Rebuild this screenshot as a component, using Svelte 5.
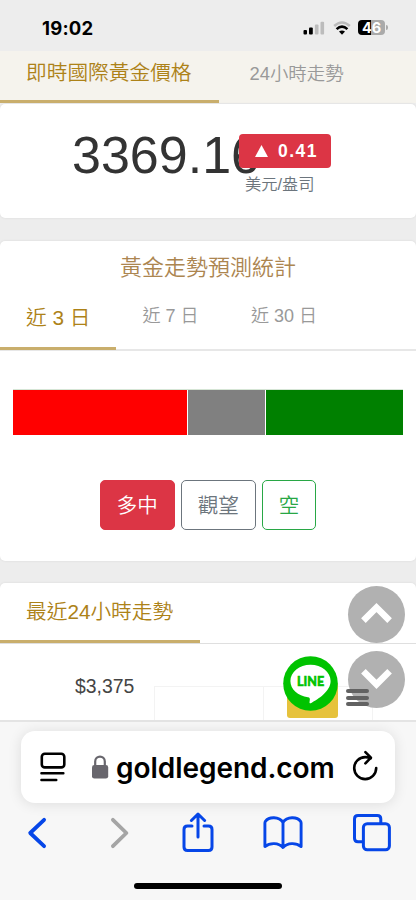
<script lang="ts">
	const periods = ['近 3 日', '近 7 日', '近 30 日'];
	let period = $state(0);

	const forecast = [
		{ name: 'long', share: 174 },
		{ name: 'hold', share: 77 },
		{ name: 'short', share: 137 }
	];
</script>

<div class="phone">
	<header class="status">
		<span class="time">19:02</span>
		<div class="signals">
			<svg width="22" height="14" viewBox="0 0 22 14">
				<rect x="0.5" y="9" width="3.5" height="4.5" rx="1" />
				<rect x="6" y="6.5" width="3.8" height="7" rx="1" />
				<rect x="11.9" y="3.6" width="3.6" height="9.9" rx="1" fill="#bcbcbc" />
				<rect x="17.5" y="0.8" width="3.6" height="12.7" rx="1" fill="#bcbcbc" />
			</svg>
			<svg class="wifi" width="18" height="14" viewBox="0 0 18 14" fill="none" stroke-width="2.6">
				<path d="M1.2 5 Q9 -2 16.8 5" stroke="#bcbcbc" />
				<path d="M3.6 8.1 Q9 3.1 14.4 8.1" stroke="#000" />
				<path d="M6 10.6 Q9 8.6 12 10.6 L9 13.7Z" fill="#000" />
			</svg>
			<div class="battery"><span>46</span></div>
			<i class="battery-cap"></i>
		</div>
	</header>

	<main>
		<nav class="tabs top-tabs">
			<button class="tab active">即時國際黃金價格</button>
			<button class="tab">24小時走勢</button>
		</nav>

		<section class="card price-card">
			<span class="price">3369.16</span>
			<div class="change">
				<span class="badge"><svg width="13" height="12" viewBox="0 0 13 12"><path d="M6.5 0L13 12H0Z" fill="#fff" /></svg>0.41</span>
				<span class="unit">美元/盎司</span>
			</div>
		</section>

		<section class="card forecast-card">
			<h2>黃金走勢預測統計</h2>
			<nav class="tabs period-tabs">
				{#each periods as label, i}
					<button class="tab" class:active={period === i} onclick={() => (period = i)}>{label}</button>
				{/each}
			</nav>
			<div class="bar">
				{#each forecast as part}
					<div class={part.name} style="flex: {part.share} 0 0"></div>
				{/each}
			</div>
			<div class="votes">
				<button class="vote danger">多中</button>
				<button class="vote secondary">觀望</button>
				<button class="vote success">空</button>
			</div>
		</section>

		<section class="card chart-card">
			<nav class="tabs chart-tabs">
				<button class="tab active">最近24小時走勢</button>
			</nav>
			<div class="chart">
				<span class="axis">$3,375</span>
				<div class="grid"><i></i><i></i></div>
			</div>
		</section>

		<button class="scroll up" aria-label="Scroll up">
			<svg width="57" height="57" viewBox="0 0 57 57"><path d="M15.4 34.6L28.5 21.5L41.6 34.6" /></svg>
		</button>
		<button class="scroll down" aria-label="Scroll down">
			<svg width="57" height="57" viewBox="0 0 57 57"><path d="M15.4 20.2L28.5 33.3L41.6 20.2" /></svg>
		</button>
		<div class="range"></div>
		<button class="line" aria-label="LINE">
			<svg width="55" height="55" viewBox="0 0 55 55">
				<circle cx="27.5" cy="27.5" r="27.3" fill="#00c300" />
				<path d="M27.5 8.7C16.4 8.7 7.4 16 7.4 25.1C7.4 33.4 15 40.2 25 41.3C26.7 41.7 27.1 42.4 26.8 44L26.5 46.2C26.4 47.2 27.2 47.6 28.3 47C34.8 43.3 47.6 35.7 47.6 25.1C47.6 16 38.6 8.7 27.5 8.7Z" fill="#fff" />
				<text x="27.6" y="30.4" text-anchor="middle" textLength="27" lengthAdjust="spacingAndGlyphs">LINE</text>
			</svg>
		</button>
		<div class="menu"><i></i><i></i><i></i></div>
	</main>

	<footer class="browser">
		<div class="address">
			<svg class="page-icon" width="27" height="31" viewBox="0 0 27 31" fill="none" stroke="#000" stroke-width="2.6" stroke-linecap="round">
				<rect x="1.8" y="1.8" width="22.5" height="13.6" rx="3" />
				<path d="M1.4 21.3H23.4M1.4 28H16.3" stroke-width="2.4" />
			</svg>
			<svg class="lock" width="18" height="24" viewBox="0 0 18 24">
				<path d="M4.2 11V6.5C4.2 0 13.8 0 13.8 6.5V11" fill="none" stroke="#68666d" stroke-width="2.2" />
				<rect x="1" y="10" width="16.2" height="13.6" rx="2.4" fill="#68666d" />
			</svg>
			<span class="host">goldlegend.com</span>
			<svg class="reload" width="27" height="31" viewBox="0 0 27 31" fill="none" stroke="#000" stroke-width="2.6" stroke-linecap="round" stroke-linejoin="round">
				<path d="M24.2 18.1A11 11 0 1 1 13.2 7.1C15.3 7.1 17 7.5 18.7 8.2" />
				<path d="M13.4 2.1L18.9 7.7L13.4 13.4" />
			</svg>
		</div>
		<div class="tools">
			<svg width="20" height="34" viewBox="0 0 20 34" stroke-width="3.8"><path d="M17.1 3.8L3.2 17L17.1 30.2" /></svg>
			<svg class="forward" width="20" height="34" viewBox="0 0 20 34" stroke-width="3.8"><path d="M2.9 3.8L16.4 17L2.9 30.2" /></svg>
			<svg class="share" width="34" height="41" viewBox="0 0 34 41" stroke-width="3">
				<path d="M11 14H6.5Q3 14 3 17.5V35Q3 38.5 6.5 38.5H27.5Q31 38.5 31 35V17.5Q31 14 27.5 14H23M17 25V2.5M10.4 8.5L17 2L23.6 8.5" />
			</svg>
			<svg class="book" width="42" height="36" viewBox="0 0 42 36" stroke-width="2.9">
				<path d="M21 7.4C17 1.4 7 1.4 3.4 6.3Q2.9 7 2.9 8V31.5C8 27.5 16.5 27.5 21 32.5C25.5 27.5 34 27.5 39.1 31.5V8Q39.1 7 38.6 6.3C35 1.4 25 1.4 21 7.4V31.5" />
			</svg>
			<svg class="pages" width="40" height="40" viewBox="0 0 40 40" stroke-width="3">
				<path d="M10 28.8H6Q2.5 28.8 2.5 25.3V6Q2.5 2.5 6 2.5H25.3Q28.8 2.5 28.8 6V10" />
				<rect x="11.4" y="10.7" width="26" height="26" rx="3.8" />
			</svg>
		</div>
		<div class="home"></div>
	</footer>
</div>

<style>
	:global(body) {
		margin: 0;
		background: #ededed;
	}

	.phone {
		width: 416px;
		height: 900px;
		display: flex;
		flex-direction: column;
		overflow: hidden;
		background: #ededed;
		font-family: 'Liberation Sans', 'Noto Sans CJK TC', sans-serif;
		font-weight: 350;
	}

	.phone * {
		box-sizing: border-box;
	}

	svg {
		display: block;
		flex: none;
	}

	button {
		font: inherit;
		padding: 0;
		border: 0;
		background: none;
		white-space: nowrap;
	}

	.status {
		height: 51px;
		display: flex;
		justify-content: space-between;
		align-items: center;
		padding: 4px 28px 0 42px;
	}

	.time {
		font: 700 18.5px 'Inter', sans-serif;
		letter-spacing: 0.2px;
	}

	.signals {
		display: flex;
		align-items: center;
	}

	.wifi {
		margin: 0 7px 0 8px;
	}

	.battery {
		width: 27px;
		height: 15px;
		border-radius: 4px;
		background: linear-gradient(90deg, #000 47%, #aaa 47%);
		color: #fff;
		font: 700 14.5px/15px 'Inter', sans-serif;
		text-align: center;
	}

	.battery-cap {
		width: 2px;
		height: 5px;
		margin-left: 1px;
		border-radius: 0 2px 2px 0;
		background: #aaa;
	}

	main {
		position: relative;
		height: 669px;
		flex: none;
		overflow: hidden;
	}

	.tabs {
		display: flex;
	}

	.tab {
		height: 100%;
		padding: 0 27px;
		color: #999;
		font-size: 18.4px;
	}

	.tab.active {
		color: #ad8218;
		font-size: 20.7px;
		border-bottom: 3px solid #c9ae6c;
	}

	.top-tabs {
		height: 52px;
		background: #f5f3ed;
	}

	.top-tabs .tab {
		padding: 0 31px 11px;
	}

	.top-tabs .tab.active {
		padding: 0 27px 9px 26px;
	}

	.card {
		background: #fff;
		border-radius: 5px;
		box-shadow: 0 0 2px #d5d5d5;
	}

	.price-card {
		height: 114px;
		margin-top: 1px;
		padding: 21px 0 0 72px;
		display: flex;
		align-items: flex-start;
	}

	.price {
		width: 167px;
		color: #333;
		font-size: 52px;
		line-height: 60px;
	}

	.change {
		display: flex;
		flex-direction: column;
		position: relative;
		margin-top: 9px;
	}

	.badge {
		display: flex;
		align-items: center;
		gap: 10px;
		width: 92px;
		height: 34px;
		padding-left: 16px;
		border-radius: 4px;
		background: #dc3545;
		color: #fff;
		font-size: 17.5px;
		font-weight: 700;
		letter-spacing: 1.5px;
	}

	.unit {
		margin: 3px 0 0 6px;
		color: #6c757d;
		font-size: 16.3px;
		line-height: 26px;
	}

	.forecast-card {
		height: 320px;
		margin-top: 23px;
	}

	h2 {
		margin: 0;
		padding-top: 10px;
		color: #ac8550;
		font-size: 22px;
		font-weight: 350;
		line-height: 34px;
		text-align: center;
	}

	.period-tabs {
		height: 66px;
		border-bottom: 2px solid #e7e7e7;
	}

	.period-tabs .tab {
		height: 65px;
		padding: 0 26.5px 7px 26px;
		font-size: 18px;
	}

	.period-tabs .tab.active {
		padding: 0 26px;
		font-size: 20.7px;
	}

	.bar {
		display: flex;
		gap: 1.5px;
		height: 46px;
		margin: 38px 13px 0;
		border-top: 1px solid #d5e5d5;
	}

	.long {
		background: #f00;
	}

	.hold {
		background: #808080;
	}

	.short {
		background: #008000;
	}

	.votes {
		display: flex;
		justify-content: center;
		gap: 6px;
		margin-top: 45px;
	}

	.vote {
		height: 50px;
		padding: 0 16px 2px;
		border: 1px solid;
		border-radius: 5px;
		font-size: 20.5px;
	}

	.danger {
		border-color: #dc3545;
		background: #dc3545;
		color: #fff;
	}

	.secondary {
		color: #6c757d;
	}

	.success {
		color: #28a745;
	}

	.chart-card {
		height: 150px;
		margin-top: 22px;
	}

	.chart-tabs {
		height: 61px;
		border-bottom: 1px solid #dfdfdf;
	}

	.chart-tabs .tab.active {
		padding: 0 27px 4px 26px;
	}

	.chart {
		display: flex;
		align-items: flex-start;
	}

	.axis {
		width: 154px;
		padding: 31px 0 0 75px;
		color: #444;
		font-size: 19.4px;
		line-height: 22px;
	}

	.grid {
		display: flex;
		margin-top: 42px;
	}

	.grid i {
		width: 109px;
		height: 50px;
		border: solid #f3f3f3;
		border-width: 1px 0 0 1px;
	}

	.grid i:last-child {
		border-right-width: 1px;
		width: 110px;
	}

	/* floating page controls */
	.scroll {
		position: absolute;
		left: 347.5px;
		border-radius: 50%;
		background: #b1b1b1;
	}

	.scroll path {
		fill: none;
		stroke: #fff;
		stroke-width: 6.5;
	}

	.up {
		top: 535px;
	}

	.down {
		top: 600px;
	}

	.range {
		position: absolute;
		left: 287px;
		top: 631px;
		width: 51px;
		height: 36px;
		border-radius: 3px;
		background: #e6c23c;
	}

	.line {
		position: absolute;
		left: 283px;
		top: 605px;
	}

	.line text {
		fill: #00c300;
		stroke: #00c300;
		stroke-width: 0.7px;
		font: 700 14px 'Lato', sans-serif;
	}

	.menu {
		position: absolute;
		left: 346px;
		top: 638px;
		width: 23px;
		display: flex;
		flex-direction: column;
		gap: 2.5px;
	}

	.menu i {
		height: 4px;
		border-radius: 2px;
		background: #626262;
	}

	.browser {
		flex: 1;
		border-top: 2px solid #e4e4e4;
		background: #f7f7f7;
	}

	.address {
		display: flex;
		align-items: center;
		width: 374px;
		height: 72px;
		margin: 9px 0 0 21px;
		padding: 0 16px 0 19px;
		border-radius: 14px;
		background: #fff;
		box-shadow: 0 1px 14px rgba(0, 0, 0, 0.11);
	}

	.lock {
		margin: 0 7px 0 24px;
	}

	.host {
		flex: 1;
		width: 0;
		padding-top: 1px;
		font: 600 28px 'Inter', sans-serif;
		letter-spacing: -0.05px;
		white-space: nowrap;
	}

	.reload {
		margin-bottom: 3px;
	}

	.tools {
		display: flex;
		align-items: center;
		height: 60px;
		padding-left: 27px;
	}

	.tools svg {
		fill: none;
		stroke: #0646e8;
		stroke-linecap: round;
		stroke-linejoin: round;
	}

	.tools .forward {
		margin-left: 63px;
		stroke: #a5a5a5;
	}

	.tools .share {
		margin: 0 47px 2px 51px;
	}

	.tools .pages {
		margin-left: 48px;
	}

	.home {
		width: 148px;
		height: 6px;
		margin: 20px auto 0;
		border-radius: 3px;
		background: #000;
	}
</style>
